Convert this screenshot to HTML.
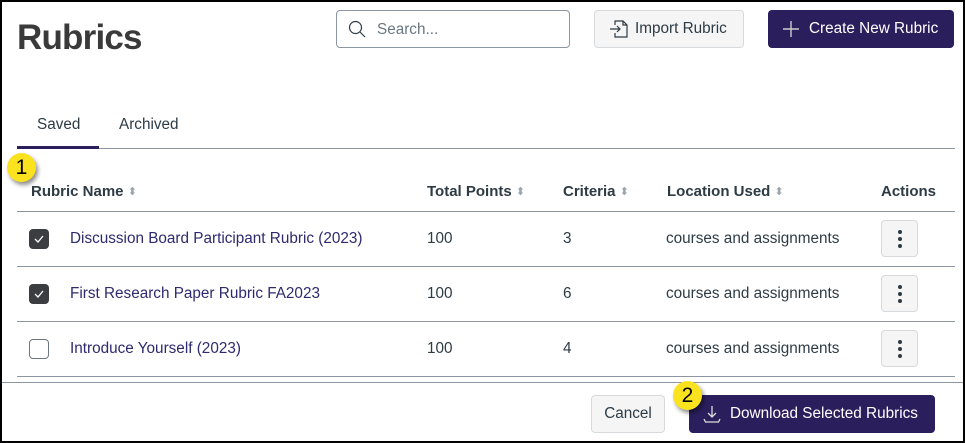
<!DOCTYPE html>
<html><head><style>
*{box-sizing:border-box;margin:0;padding:0}
body{width:965px;height:443px;background:#fff;font-family:"Liberation Sans",sans-serif;color:#2d3b45;position:relative;overflow:hidden}
.frame{position:absolute;left:0;top:0;width:965px;height:443px;border:2px solid #000;pointer-events:none}
.a{position:absolute;white-space:nowrap}
.line{position:absolute;height:1px;background:#8b96a0}
.btn{position:absolute;border-radius:4px;display:flex;align-items:center;font-size:15.3px}
.cb{position:absolute;left:29px;width:20px;height:20px;border-radius:4px}
.cb.on{background:#3b3d40}
.cb.off{border:1px solid #6b7780;background:#fff}
.name{position:absolute;left:70px;font-size:15.3px;color:#2d2a6e;white-space:nowrap}
.cell{position:absolute;font-size:15.3px;color:#2d3b45;white-space:nowrap}
.kb{position:absolute;left:881px;width:37px;height:37px;border:1px solid #d7dadd;background:#f5f5f5;border-radius:4px}
.kb i{position:absolute;left:16px;width:4px;height:4px;border-radius:50%;background:#2d3b45}
.h{position:absolute;top:183px;font-size:15px;font-weight:bold;color:#2d3b45;white-space:nowrap}
.s{color:#9aa3ab;font-size:11px;font-weight:normal;vertical-align:1px}
.badge{position:absolute;width:29px;height:29px;border-radius:50%;background:#fbe21f;box-shadow:2px 3px 4px rgba(0,0,0,.45);font-size:21px;color:#000;text-align:center;line-height:29px}
</style></head><body>
<div class="a" style="left:17px;top:18px;font-size:35px;font-weight:bold;color:#3a3a3a;letter-spacing:-0.8px">Rubrics</div>
<div class="btn" style="left:336px;top:10px;width:234px;height:38px;border:1px solid #8b96a0;background:#fff;color:#6b7780">
<svg style="margin-left:11px" width="18" height="18" viewBox="0 0 18 18"><circle cx="7.5" cy="7.5" r="6" fill="none" stroke="#2d3b45" stroke-width="1.2"/><path d="M12 12l5 5" stroke="#2d3b45" stroke-width="1.2"/></svg>
<span style="margin-left:11px;margin-top:2px">Search...</span></div>
<div class="btn" style="left:594px;top:10px;width:150px;height:38px;border:1px solid #d7dadd;background:#f5f5f5;color:#2d3b45">
<svg style="margin-left:14px" width="20" height="20" viewBox="0 0 20 20" fill="none" stroke="#2d3b45" stroke-width="1.2"><path d="M6 6V2h8l4 4v12H6v-4"/><path d="M14 2v4h4"/><path d="M1 10h10M8 7l3 3-3 3"/></svg>
<span style="margin-left:6px">Import Rubric</span></div>
<div class="btn" style="left:768px;top:10px;width:186px;height:38px;background:#2a1f5c;color:#fff">
<svg style="margin-left:14px" width="18" height="18" viewBox="0 0 18 18"><path d="M9 1v16M1 9h16" stroke="#ccc" stroke-width="1.4"/></svg>
<span style="margin-left:9px">Create New Rubric</span></div>

<div class="a" style="left:37px;top:116px;font-size:15.3px">Saved</div>
<div class="a" style="left:119px;top:116px;font-size:15.3px">Archived</div>
<div class="line" style="left:17px;top:148px;width:938px"></div>
<div class="a" style="left:17px;top:146px;width:82px;height:3px;background:#2a1f5c"></div>

<div class="h" style="left:31px">Rubric Name <span class="s">⬍</span></div>
<div class="h" style="left:427px">Total Points <span class="s">⬍</span></div>
<div class="h" style="left:563px">Criteria <span class="s">⬍</span></div>
<div class="h" style="left:667px">Location Used <span class="s">⬍</span></div>
<div class="h" style="left:881px">Actions</div>
<div class="line" style="left:17px;top:211px;width:938px"></div>

<div class="cb on" style="top:229px"><svg width="20" height="20" viewBox="0 0 20 20"><path d="M6 10l3 3 5-6" fill="none" stroke="#fff" stroke-width="1.3"/></svg></div>
<div class="name" style="top:230px">Discussion Board Participant Rubric (2023)</div>
<div class="cell" style="left:427px;top:230px">100</div><div class="cell" style="left:563px;top:230px">3</div>
<div class="cell" style="left:666px;top:230px">courses and assignments</div>
<div class="kb" style="top:220px"><i style="top:9px"></i><i style="top:16px"></i><i style="top:23px"></i></div>
<div class="line" style="left:17px;top:266px;width:938px"></div>

<div class="cb on" style="top:284px"><svg width="20" height="20" viewBox="0 0 20 20"><path d="M6 10l3 3 5-6" fill="none" stroke="#fff" stroke-width="1.3"/></svg></div>
<div class="name" style="top:285px">First Research Paper Rubric FA2023</div>
<div class="cell" style="left:427px;top:285px">100</div><div class="cell" style="left:563px;top:285px">6</div>
<div class="cell" style="left:666px;top:285px">courses and assignments</div>
<div class="kb" style="top:275px"><i style="top:9px"></i><i style="top:16px"></i><i style="top:23px"></i></div>
<div class="line" style="left:17px;top:321px;width:938px"></div>

<div class="cb off" style="top:339px"></div>
<div class="name" style="top:340px">Introduce Yourself (2023)</div>
<div class="cell" style="left:427px;top:340px">100</div><div class="cell" style="left:563px;top:340px">4</div>
<div class="cell" style="left:666px;top:340px">courses and assignments</div>
<div class="kb" style="top:330px"><i style="top:9px"></i><i style="top:16px"></i><i style="top:23px"></i></div>
<div class="line" style="left:17px;top:376px;width:938px"></div>
<div class="line" style="left:0;top:382px;width:965px"></div>

<div class="btn" style="left:591px;top:395px;width:74px;height:38px;border:1px solid #d7dadd;background:#f5f5f5;justify-content:center">Cancel</div>
<div class="btn" style="left:689px;top:395px;width:246px;height:38px;background:#2a1f5c;color:#fff">
<svg style="margin-left:13px" width="20" height="20" viewBox="0 0 20 20" fill="none" stroke="#ddd" stroke-width="1.3"><path d="M10 2v11M6 9l4 4 4-4M2 15l1.5 3h13l1.5-3"/></svg>
<span style="margin-left:8px">Download Selected Rubrics</span></div>

<div class="badge" style="left:7px;top:153px">1</div>
<div class="badge" style="left:673px;top:381px">2</div>
<div class="frame"></div>
</body></html>
